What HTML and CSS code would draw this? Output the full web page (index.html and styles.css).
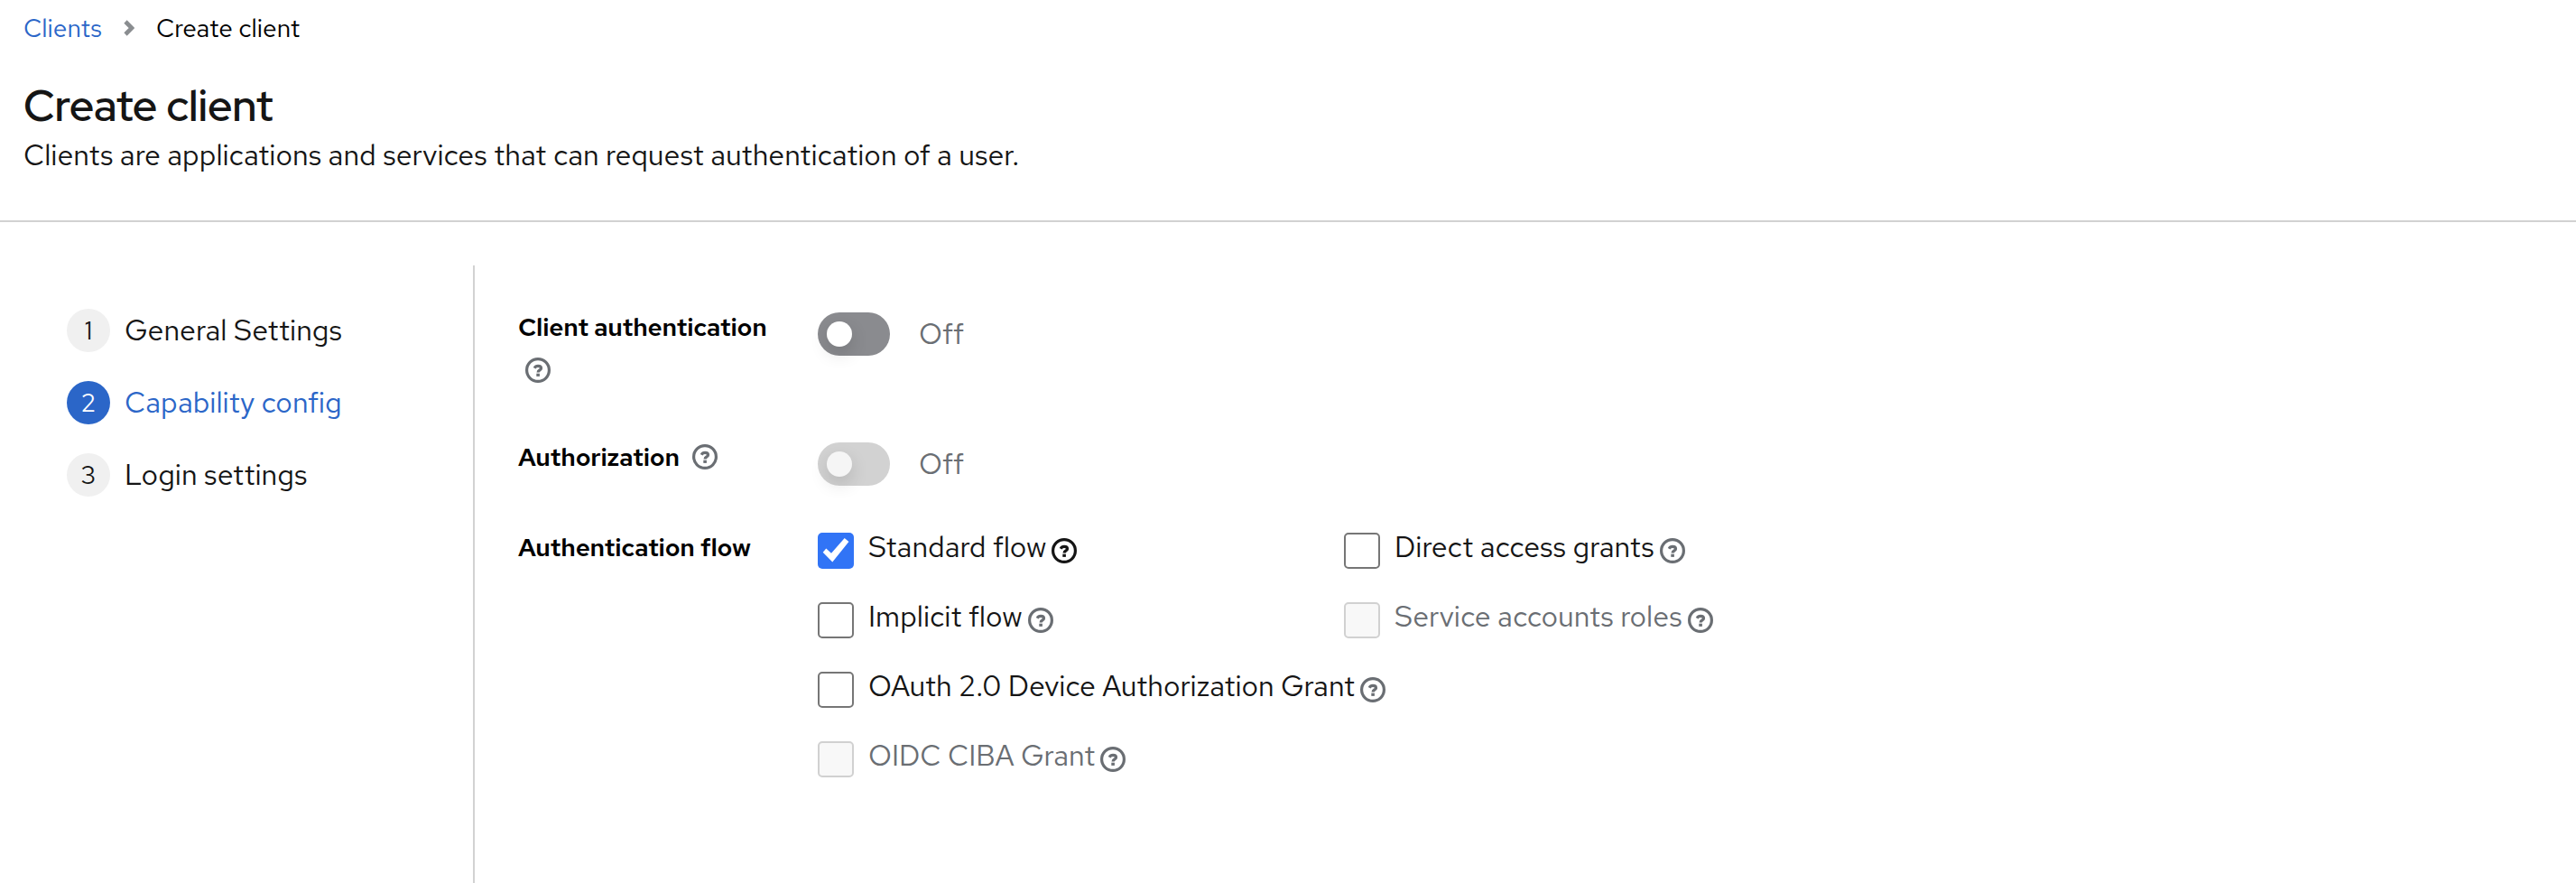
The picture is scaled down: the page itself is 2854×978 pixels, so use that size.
FILE: index.html
```html
<!DOCTYPE html>
<html lang="en">
<head>
    <meta charset="UTF-8">
    <meta name="viewport" content="width=device-width, initial-scale=1.0">
    <title>Create client</title>
    <link rel="stylesheet" href="styles.css">
</head>
<body>
    <!-- Shared help icon -->
    <svg class="sprite" width="0" height="0">
        <symbol id="help" viewBox="0 0 28 28">
            <circle cx="14" cy="14" r="12.4" fill="none" stroke="currentColor" stroke-width="3.2"/>
            <path d="M10.2 11.7C11 10.1 12.3 9.4 14.1 9.4C16.2 9.4 17.5 10.4 17.5 11.9C17.5 14 14.1 13.8 14.1 16.5" fill="none" stroke="currentColor" stroke-width="3.2"/>
            <rect x="12.3" y="17.7" width="3.6" height="3.2" fill="currentColor"/>
        </symbol>
    </svg>

    <header class="page-header">
        <nav class="breadcrumb">
            <a href="#">Clients</a>
            <svg class="chevron" viewBox="0 0 12 18"><path d="M2 2L9 9L2 16" fill="none" stroke="currentColor" stroke-width="4.6"/></svg>
            <span>Create client</span>
        </nav>
        <h1>Create client</h1>
        <p class="subtitle">Clients are applications and services that can request authentication of a user.</p>
    </header>

    <div class="wizard">
        <nav class="steps">
            <a class="step" href="#"><span class="step-number">1</span><span class="step-name">General Settings</span></a>
            <a class="step current" href="#"><span class="step-number">2</span><span class="step-name">Capability config</span></a>
            <a class="step" href="#"><span class="step-number">3</span><span class="step-name">Login settings</span></a>
        </nav>

        <form class="config">
            <div class="form-row">
                <div class="form-label">Client authentication <svg class="help"><use href="#help"/></svg></div>
                <div class="switch-field">
                    <span class="switch"></span>
                    <span class="switch-text">Off</span>
                </div>
            </div>

            <div class="form-row short">
                <div class="form-label">Authorization <svg class="help"><use href="#help"/></svg></div>
                <div class="switch-field">
                    <span class="switch disabled"></span>
                    <span class="switch-text">Off</span>
                </div>
            </div>

            <div class="form-row">
                <div class="form-label">Authentication flow</div>
                <div class="flows">
                    <label class="check">
                        <span class="box checked"><svg viewBox="0 0 40 40"><path d="M5.7 21.8L9.3 17.6L15 22.8L29.7 6L34.4 10L16.3 32.6Z" fill="#fff"/></svg></span>
                        <span class="check-text">Standard flow</span>
                        <svg class="help dark"><use href="#help"/></svg>
                    </label>
                    <label class="check">
                        <span class="box"></span>
                        <span class="check-text">Direct access grants</span>
                        <svg class="help"><use href="#help"/></svg>
                    </label>
                    <label class="check">
                        <span class="box"></span>
                        <span class="check-text">Implicit flow</span>
                        <svg class="help"><use href="#help"/></svg>
                    </label>
                    <label class="check disabled">
                        <span class="box"></span>
                        <span class="check-text">Service accounts roles</span>
                        <svg class="help"><use href="#help"/></svg>
                    </label>
                    <label class="check wide">
                        <span class="box"></span>
                        <span class="check-text tight">OAuth 2.0 Device Authorization Grant</span>
                        <svg class="help"><use href="#help"/></svg>
                    </label>
                    <label class="check wide disabled">
                        <span class="box"></span>
                        <span class="check-text">OIDC CIBA Grant</span>
                        <svg class="help"><use href="#help"/></svg>
                    </label>
                </div>
            </div>
        </form>
    </div>
</body>
</html>
```
FILE: styles.css
```css
* {
    box-sizing: border-box;
}
body {
    font-family: "Red Hat Text", Lato, sans-serif;
    font-size: 32px;
    margin: 0;
    height: 978px;
    display: flex;
    flex-direction: column;
    overflow: hidden;
    color: #151515;
    background-color: #fff;
}
a {
    color: inherit;
    text-decoration: none;
}
.sprite {
    position: absolute;
}

/* Header */
.page-header {
    height: 246px;
    padding: 10px 26px 0;
    border-bottom: 2px solid #d2d2d2;
}
.breadcrumb {
    display: flex;
    align-items: center;
    height: 42px;
    font-size: 28px;
    line-height: 42px;
    color: #000;
}
.breadcrumb a {
    color: #2b66c8;
}
.chevron {
    width: 12px;
    height: 18px;
    margin: 0 24px 0 24px;
    color: #8a8d90;
}
h1 {
    margin: 34px 0 -1px;
    font-family: "Red Hat Display", "Red Hat Text", Lato, sans-serif;
    font-size: 48px;
    font-weight: 600;
    line-height: 63px;
    letter-spacing: -0.1px;
}
.subtitle {
    margin: 0;
    line-height: 48px;
}

/* Wizard */
.wizard {
    flex: 1;
    display: flex;
    margin-top: 48px;
}
.steps {
    width: 526px;
    padding: 48px 0 0 74px;
    border-right: 2px solid #d2d2d2;
    display: flex;
    flex-direction: column;
    gap: 32px;
}
.step {
    display: flex;
    gap: 16px;
    height: 48px;
    line-height: 48px;
}
.step-number {
    width: 48px;
    height: 48px;
    border-radius: 50%;
    background-color: #f0f0f0;
    font-size: 28px;
    text-align: center;
}
.current {
    color: #2b66c8;
}
.current .step-number {
    background-color: #2b66c8;
    color: #fff;
}

/* Form */
.config {
    padding: 42px 0 0 48px;
}
.form-row {
    display: grid;
    grid-template-columns: 300px auto;
    column-gap: 32px;
    min-height: 144px;
}
.form-row.short {
    min-height: 100px;
}
.form-label {
    padding-top: 2px;
    font-size: 28px;
    font-weight: 600;
    line-height: 48px;
    letter-spacing: -0.2px;
    color: #000;
}
.help {
    width: 28px;
    height: 28px;
    flex-shrink: 0;
    color: #6a6e73;
}
.help.dark {
    color: #151515;
}
.form-label .help {
    margin-left: 8px;
    vertical-align: -4px;
}
.switch-field {
    display: flex;
    gap: 32px;
    padding-top: 10px;
}
.switch {
    width: 80px;
    height: 48px;
    padding: 10px;
    border-radius: 24px;
    background-color: #8a8b8f;
}
.switch::before {
    content: "";
    display: block;
    width: 28px;
    height: 28px;
    border-radius: 50%;
    background-color: #fff;
    box-shadow: 0 8px 20px rgba(0, 0, 0, 0.14);
}
.switch.disabled {
    background-color: #d2d2d2;
}
.switch.disabled::before {
    background-color: #f5f5f5;
}
.switch-text {
    line-height: 48px;
    color: #6a6e73;
}
.flows {
    display: grid;
    grid-template-columns: 583px auto;
    grid-auto-rows: 40px;
    row-gap: 37px;
    padding-top: 10px;
}
.check {
    display: flex;
    white-space: nowrap;
}
.check.wide {
    grid-column: 1 / 3;
}
.box {
    width: 40px;
    height: 40px;
    margin-right: 16px;
    border: 2px solid #767676;
    border-radius: 5px;
    flex-shrink: 0;
}
.box.checked {
    border: none;
    background-color: #3174f6;
}
.box svg {
    display: block;
}
.check-text {
    line-height: 32px;
}
.check-text.tight {
    letter-spacing: -0.07px;
}
.check .help {
    margin: 6px 0 0 6px;
}
.check.disabled {
    color: #6a6e73;
}
.check.disabled .box {
    border-color: #d1d1d1;
    background-color: #f8f8f8;
}
```
